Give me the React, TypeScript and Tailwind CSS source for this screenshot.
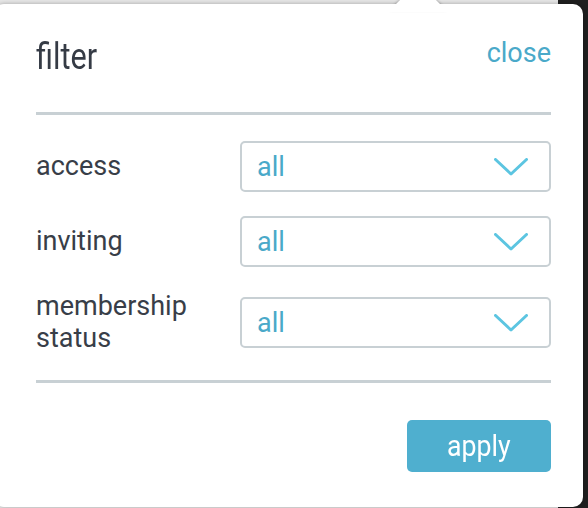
import React, { useState } from "react";

type FilterRow = {
  key: string;
  label: string;
  value: string;
};

const rows: FilterRow[] = [
  { key: "access", label: "access", value: "all" },
  { key: "inviting", label: "inviting", value: "all" },
  { key: "membership", label: "membership status", value: "all" },
];

function Chevron() {
  return (
    <svg width="34" height="18" viewBox="0 0 34 18" fill="none" className="shrink-0">
      <path
        d="M1.5 1.5 L17 16 L32.5 1.5"
        stroke="#5cc5e1"
        strokeWidth="3"
        strokeLinecap="round"
        strokeLinejoin="round"
      />
    </svg>
  );
}

function SelectBox({ value }: { value: string }) {
  return (
    <button className="flex h-[51px] w-full items-center justify-between rounded-[5px] border-2 border-[#c8d0d4] bg-white pl-[15px] pr-[21px] text-left">
      <span className="text-[27px] leading-[32px] text-[#4aa9c9]">{value}</span>
      <Chevron />
    </button>
  );
}

export default function App() {
  const [values] = useState(rows);

  return (
    <div
      className="relative h-[508px] w-[588px] overflow-hidden bg-[#e6e6e6]"
      style={{ fontFamily: "Roboto, 'Noto Sans', sans-serif" }}
    >
      {/* dark app chrome on the right, behind the popover */}
      <div className="absolute right-0 top-0 h-full w-[30px] bg-[#1f1f1f]" />

      <div className="absolute left-[-6px] top-[4px] h-[503px] w-[589px] rounded-[10px] bg-white pl-[42px] pr-[32px] shadow-[0_0_4px_rgba(0,0,0,0.3)]">
        {/* arrow pointing up to the trigger */}
        <svg
          width="56"
          height="30"
          viewBox="0 0 56 30"
          className="absolute left-[396px] top-[-24px] drop-shadow-[0_0_1.5px_rgba(0,0,0,0.35)]"
        >
          <path d="M0 30 L25 5 Q28 2 31 5 L56 30 Z" fill="#ffffff" />
        </svg>
        <div className="absolute left-[390px] top-0 h-[8px] w-[70px] bg-white" />

        <div className="relative flex items-start justify-between pt-[31px]">
          <h1 className="inline-block origin-left scale-x-[0.85] text-[36px] leading-[44px] font-normal text-[#353b45]">
            filter
          </h1>
          <button className="mt-[2px] text-[27px] leading-[32px] text-[#4aa9c9]">close</button>
        </div>

        <div className="relative mt-[33px] h-[3px] bg-[#c8d0d4]" />

        <div className="relative mt-[26px] flex flex-col gap-[24px]">
          {values.map((row) => (
            <div key={row.key} className="grid grid-cols-[204px_1fr] items-center">
              <span className="w-[170px] text-[27px] leading-[31.5px] text-[#383e48]">{row.label}</span>
              <SelectBox value={row.value} />
            </div>
          ))}
        </div>

        <div className="relative mt-[26px] h-[3px] bg-[#c8d0d4]" />

        <div className="relative mt-[37px] flex justify-end">
          <button className="flex h-[52px] w-[144px] items-center justify-center rounded-[5px] bg-[#4fafcf]">
            <span className="inline-block scale-x-[0.89] text-[30px] leading-[36px] text-white">apply</span>
          </button>
        </div>
      </div>
    </div>
  );
}
